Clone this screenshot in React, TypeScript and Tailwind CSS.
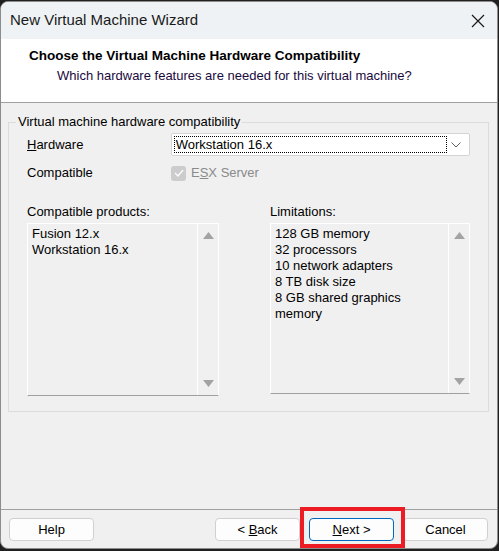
import React from "react";

const font = { fontFamily: '"Liberation Sans", Arial, sans-serif' };

function UpTri() {
  return (
    <svg width="11" height="7" viewBox="0 0 11 7">
      <polygon points="5.5,0 11,7 0,7" fill="#a3a3a3" />
    </svg>
  );
}
function DownTri() {
  return (
    <svg width="11" height="7" viewBox="0 0 11 7">
      <polygon points="0,0 11,0 5.5,7" fill="#a3a3a3" />
    </svg>
  );
}

function ListBox({ items, w, h, textW }: { items: string[]; w: string; h: string; textW: string }) {
  return (
    <div className={`flex ${w} ${h} border border-white border-b-[#a0a0a0] bg-[#f0f0f0]`}>
      <div className={`flex-1 pl-[4px] pt-[2px] text-[13px] leading-[16px] text-black`}>
        <div className={textW}>
          {items.map((t) => (
            <div key={t}>{t}</div>
          ))}
        </div>
      </div>
      <div className="flex w-[21px] flex-col items-center justify-between border-l border-white pt-[8px] pb-[8px]">
        <UpTri />
        <DownTri />
      </div>
    </div>
  );
}

function Btn({ children, primary }: { children: React.ReactNode; primary?: boolean }) {
  return (
    <div
      className={`flex h-[23px] w-[85px] items-center justify-center rounded-[4px] border bg-[#fdfdfd] text-[13px] text-black ${
        primary ? "border-[#0067c0]" : "border-[#d0d0d0]"
      }`}
    >
      <span className="whitespace-pre">{children}</span>
    </div>
  );
}

export default function App() {
  return (
    <div className="h-[551px] w-[499px] bg-[#202020] pt-[1px]" style={font}>
      <div className="flex h-[548px] w-[498px] flex-col overflow-hidden rounded-[8px] border border-[#8c8c8c] bg-[#f0f0f0]">
        {/* Title bar */}
        <div className="flex h-[37px] shrink-0 items-center justify-between bg-[#eef2f5] pl-[9px] pr-[12px]">
          <span className="text-[15px] text-[#1a1a1a]">New Virtual Machine Wizard</span>
          <svg width="14" height="14" viewBox="0 0 14 14">
            <path d="M1 1 L13 13 M13 1 L1 13" stroke="#1a1a1a" strokeWidth="1.2" />
          </svg>
        </div>
        {/* Header */}
        <div className="flex h-[64px] shrink-0 flex-col border-b border-[#a0a0a0] bg-white pl-[28px] pt-[8px]">
          <div className="text-[13.5px] font-bold leading-[18px] text-black">
            Choose the Virtual Machine Hardware Compatibility
          </div>
          <div className="pl-[28px] pt-[2px] text-[13px] leading-[18px] text-[#1a0a40]">
            Which hardware features are needed for this virtual machine?
          </div>
        </div>
        {/* Body */}
        <div className="flex flex-1 flex-col px-[7px] pt-[19px]">
          <div className="relative h-[290px] w-[481px] border border-[#dcdcdc] px-[18px] pt-[10px]">
            <div className="absolute left-[7px] top-[-9px] bg-[#f0f0f0] px-[2px] text-[13px] leading-[16px] text-black">
              Virtual machine hardware compatibility
            </div>
            <div className="flex h-[23px] items-center">
              <div className="w-[144px] text-[13px] text-black">
                <span className="underline">H</span>ardware
              </div>
              <div className="flex h-[23px] w-[300px] items-center rounded-[2px] border border-[#d4d4d4] bg-white pl-[2px] pr-[8px]">
                <div className="flex h-[17px] w-[273px] items-center border border-dotted border-black pl-[1px] text-[13px] text-black">
                  Workstation 16.x
                </div>
                <div className="flex flex-1 justify-end">
                  <svg width="10" height="6" viewBox="0 0 10 6">
                    <path d="M0.5 0.5 L5 5 L9.5 0.5" fill="none" stroke="#606060" strokeWidth="1" />
                  </svg>
                </div>
              </div>
            </div>
            <div className="mt-[9px] flex h-[16px] items-center">
              <div className="w-[144px] text-[13px] text-black">Compatible</div>
              <div className="flex h-[15px] w-[15px] items-center justify-center rounded-[3px] bg-[#cccccc]">
                <svg width="10" height="8" viewBox="0 0 10 8">
                  <path d="M1 4 L4 7 L9 1" fill="none" stroke="#ffffff" strokeWidth="1.2" />
                </svg>
              </div>
              <div className="pl-[5px] text-[13px] text-[#8a8a8a]">
                E<span className="underline">S</span>X Server
              </div>
            </div>
            <div className="mt-[23px] flex">
              <div className="flex w-[246px] flex-col">
                <div className="text-[13px] leading-[16px] text-black">Compatible products:</div>
                <div className="mt-[3px]">
                  <ListBox items={["Fusion 12.x", "Workstation 16.x"]} w="w-[192px]" h="h-[173px]" textW="w-[160px]" />
                </div>
              </div>
              <div className="flex flex-col">
                <div className="text-[13px] leading-[16px] text-black">Limitations:</div>
                <div className="mt-[3px]">
                  <ListBox
                    items={["128 GB memory", "32 processors", "10 network adapters", "8 TB disk size", "8 GB shared graphics memory"]}
                    w="w-[200px]"
                    h="h-[171px]"
                    textW="w-[150px]"
                  />
                </div>
              </div>
            </div>
          </div>
        </div>
        {/* Footer */}
        <div className="flex h-[39px] shrink-0 items-start border-t border-[#a0a0a0] pl-[8px] pt-[8px]">
          <Btn>Help</Btn>
          <div className="ml-[121px] flex gap-[9px]">
            <Btn>
              {"< "}
              <span className="underline">B</span>ack
            </Btn>
            <div className="relative">
              <Btn primary>
                <span className="underline">N</span>
                {"ext >"}
              </Btn>
              <div className="pointer-events-none absolute left-[-9px] top-[-11px] h-[41px] w-[105px] border-[4px] border-[#ed1c24]" />
            </div>
            <Btn>Cancel</Btn>
          </div>
        </div>
      </div>
    </div>
  );
}
